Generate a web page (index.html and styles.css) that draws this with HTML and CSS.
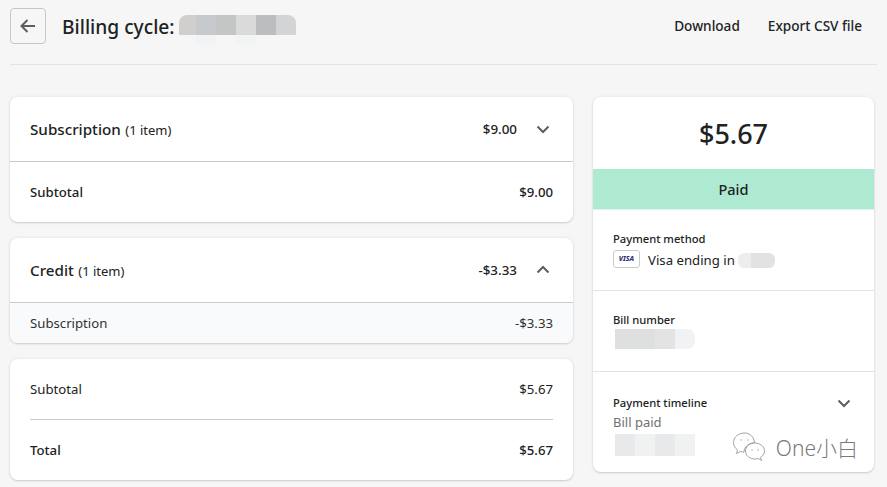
FILE: index.html
```html
<!DOCTYPE html>
<html lang="en">
<head>
<meta charset="utf-8">
<title>Billing cycle</title>
<link rel="stylesheet" href="styles.css">
</head>
<body>
<div class="page">
  <header class="top">
    <div class="top-left">
      <button class="back" aria-label="Back">
        <svg width="20" height="20" viewBox="0 0 20 20"><path d="M17 10H3.500M9.500 4l-6 6 6 6" fill="none" stroke="#5c5f62" stroke-width="2"/></svg>
      </button>
      <h1 class="title">Billing cycle:</h1>
      <div class="blur-wrap">
        <div class="blur blur-title"><i class="c1"></i><i class="c2"></i><i class="c3"></i><i class="c4"></i><i class="c5"></i><i class="c6"></i></div>
        <div class="blur blur-ghost"><i class="f0"></i><i class="f1"></i><i class="f0"></i><i class="f2"></i></div>
      </div>
    </div>
    <div class="actions"><span>Download</span><span>Export CSV file</span></div>
  </header>
  <div class="columns">
    <main class="left">
      <section class="card">
        <div class="head">
          <div><span class="name">Subscription</span> <span class="count">(1 item)</span></div>
          <div class="head-right"><span class="amount">$9.00</span>
            <svg class="chev" width="20" height="20" viewBox="0 0 20 20"><path d="M4.500 7.500l5.500 5.500 5.500-5.500" fill="none" stroke="#5c5f62" stroke-width="2"/></svg></div>
        </div>
        <div class="row row-sub strong"><span>Subtotal</span><span>$9.00</span></div>
      </section>
      <section class="card">
        <div class="head">
          <div><span class="name">Credit</span> <span class="count">(1 item)</span></div>
          <div class="head-right"><span class="amount">-$3.33</span>
            <svg class="chev" width="20" height="20" viewBox="0 0 20 20"><path d="M4.500 12.500l5.500-5.500 5.500 5.500" fill="none" stroke="#5c5f62" stroke-width="2"/></svg></div>
        </div>
        <div class="row row-item"><span>Subscription</span><span>-$3.33</span></div>
      </section>
      <section class="card totals">
        <div class="row row-total"><span>Subtotal</span><span>$5.67</span></div>
        <div class="row row-total strong final"><span>Total</span><span>$5.67</span></div>
      </section>
    </main>
    <aside class="side card">
      <div class="price">$5.67</div>
      <div class="status">Paid</div>
      <div class="block">
        <div class="label">Payment method</div>
        <div class="method">
          <span class="visa">VISA</span><span class="method-text">Visa ending in</span>
          <div class="blur blur-card"><i class="g1"></i><i class="g2"></i></div>
        </div>
      </div>
      <div class="block">
        <div class="label">Bill number</div>
        <div class="blur blur-bill"><i class="g3"></i><i class="g2"></i><i class="g4"></i></div>
      </div>
      <div class="block last">
        <div class="label-row">
          <div class="label">Payment timeline</div>
          <svg width="20" height="20" viewBox="0 0 20 20"><path d="M4.500 7.500l5.500 5.500 5.500-5.500" fill="none" stroke="#5c5f62" stroke-width="2"/></svg>
        </div>
        <div class="muted">Bill paid</div>
        <div class="blur blur-bill paid"><i class="g5"></i><i class="g4"></i><i class="g5"></i><i class="g4"></i></div>
      </div>
      <div class="mark">
        <svg width="36" height="32" viewBox="0 0 36 32" fill="#fff" stroke="#8a8a8a" stroke-width=".8">
          <path d="M13 1C6.500 1 1.500 5 1.500 10.500c0 3 1.500 5.500 4 7.500l-1 3.500 4-2c1.200.4 2.500.6 3.500.6 0-5 5-9.500 10.500-9.300C22 5 18 1 13 1z"/>
          <path d="M23 11c-5.500 0-9.500 3.700-9.500 8s4 8 9.500 8c1.200 0 2.200-.2 3.200-.5l3.300 2-1-3c2.500-1.700 4-4 4-6.500 0-4.300-4.500-8-9.500-8z"/>
          <path d="M9 7.500v1M16 7.500v1M20 17.500v1M26 17.500v1" stroke-width="1.200"/>
        </svg>
        <span>One小白</span>
      </div>
    </aside>
  </div>
</div>
</body>
</html>
```
FILE: styles.css
```css
* { box-sizing: border-box; }
html, body { margin: 0; height: 100%; }
body {
  background: #f6f6f7;
  color: #202223;
  font-family: "Noto Sans", "Open Sans", "Noto Sans CJK SC", sans-serif;
  font-size: 13.200px;
  overflow: hidden;
}
.page { padding: 0 10px; width: 887px; }
.top {
  height: 65px;
  display: flex;
  justify-content: space-between;
  align-items: flex-start;
  border-bottom: 1px solid #e1e3e5;
  padding-top: 8px;
}
.top-left { display: flex; align-items: flex-start; }
.back {
  width: 36px; height: 36px;
  background: transparent;
  border: 1px solid #c4c7ca;
  border-radius: 4px;
  padding: 0;
  display: flex; align-items: center; justify-content: center;
}
.title {
  margin: 5px 0 0 16px;
  font-size: 19.200px;
  font-weight: 500;
  line-height: 27px;
}
.blur { display: flex; }
.blur i { display: block; height: 100%; }
.blur-wrap { margin: 7px 0 0 4px; }
.blur-title { height: 20px; border-radius: 8px 8px 0 0; overflow: hidden; }
.blur-title i { width: 20px; }
.c1 { background: #d0cfcd; width: 17px !important; }
.c2 { background: #c6cacc; }
.c3 { background: #c4c5c5; }
.c4 { background: #dadada; }
.c5 { background: #bcbdbe; }
.c6 { background: #d3d4d5; }
.blur-ghost { height: 10px; }
.blur-ghost i { width: 20px; }
.f0 { background: transparent; width: 17px !important; }
.f1 { background: #f2f3f5; width: 20px !important; }
.f2 { background: #f2f3f3; }
.blur-ghost .f1 + .f0 { width: 20px !important; }
.actions { display: flex; gap: 28px; padding: 8px 15px 0 0; font-size: 13.600px; font-weight: 500; line-height: 20px; }
.columns { display: flex; gap: 20px; padding-top: 32px; align-items: flex-start; }
.left { width: 563px; display: flex; flex-direction: column; gap: 16px; }
.card {
  background: #fff;
  border-radius: 8px;
  box-shadow: 0 0 4px rgba(23,24,24,.06), 0 1px 2px rgba(23,24,24,.16);
  overflow: hidden;
}
.head {
  height: 65px;
  padding: 0 20px;
  display: flex; align-items: center; justify-content: space-between;
  border-bottom: 1px solid #c9cccf;
}
.name { font-size: 15.200px; font-weight: 500; }
.count { font-size: 13px; margin-left: 1px; }
.head-right { display: flex; align-items: center; gap: 16px; }
.amount { font-weight: 500; font-size: 13.400px; }
.chev { display: block; }
.row { display: flex; justify-content: space-between; align-items: center; padding: 0 20px; }
.row-sub { height: 60px; }
.strong { font-weight: 500; }
.row-item { height: 40px; background: #f9fafb; color: #303234; }
.row-total { height: 60px; margin: 0 20px; padding: 0; }
.final { border-top: 1px solid #c9cccf; height: 61px; }
.side { position: relative; width: 281px; height: 375px; }
.price { height: 72px; display: flex; align-items: center; justify-content: center; font-size: 27px; font-weight: 500; }
.status { height: 41px; background: #aee9d1; border-bottom: 1px solid #e1f3ea; display: flex; align-items: center; justify-content: center; font-size: 14.500px; font-weight: 500; }
.block { height: 81px; padding: 19px 20px 0; border-bottom: 1px solid #e1e3e5; }
.block.last { height: 101px; border-bottom: 0; padding-top: 21px; }
.label { font-size: 11.200px; font-weight: 500; line-height: 19px; }
.label-row { display: flex; justify-content: space-between; align-items: center; height: 19px; }
.method { display: flex; align-items: center; height: 21px; gap: 8px; }
.method-text { padding-top: 2px; }
.visa {
  width: 27px; height: 18px;
  border: 1px solid #c9cccf; border-radius: 3px;
  font-size: 7px; font-weight: 800; font-style: italic; color: #2d3571;
  display: flex; align-items: center; justify-content: center;
}
.blur-card { height: 15px; margin: 3px 0 0 -5px; border-radius: 6px; overflow: hidden; }
.g1 { width: 13px; background: #eceded; }
.g2 { width: 24px; background: #e6e7e7; }
.blur-card .g2 { background: #e2e2e2; }
.blur-bill { height: 20px; margin-left: 2px; }
.blur-bill i { width: 20px; }
.g3 { background: #dedfdf; width: 40px !important; }
.blur-bill .g2 { background: #e3e3e3; width: 20px; }
.g4 { background: #f1f2f3; border-radius: 0 8px 8px 0; }
.g5 { background: #e8e9eb; }
.blur-bill.paid { height: 22px; margin-top: 2px; }
.blur-bill.paid .g4 { border-radius: 0; background: #f0f1f1; }
.muted { color: #6d7175; line-height: 20px; font-size: 13px; }
.mark {
  position: absolute; right: 16px; bottom: 8px;
  display: flex; align-items: center; gap: 8px;
  color: #7a7a7a; font-size: 21px; font-weight: 300; line-height: 30px;
}
```
